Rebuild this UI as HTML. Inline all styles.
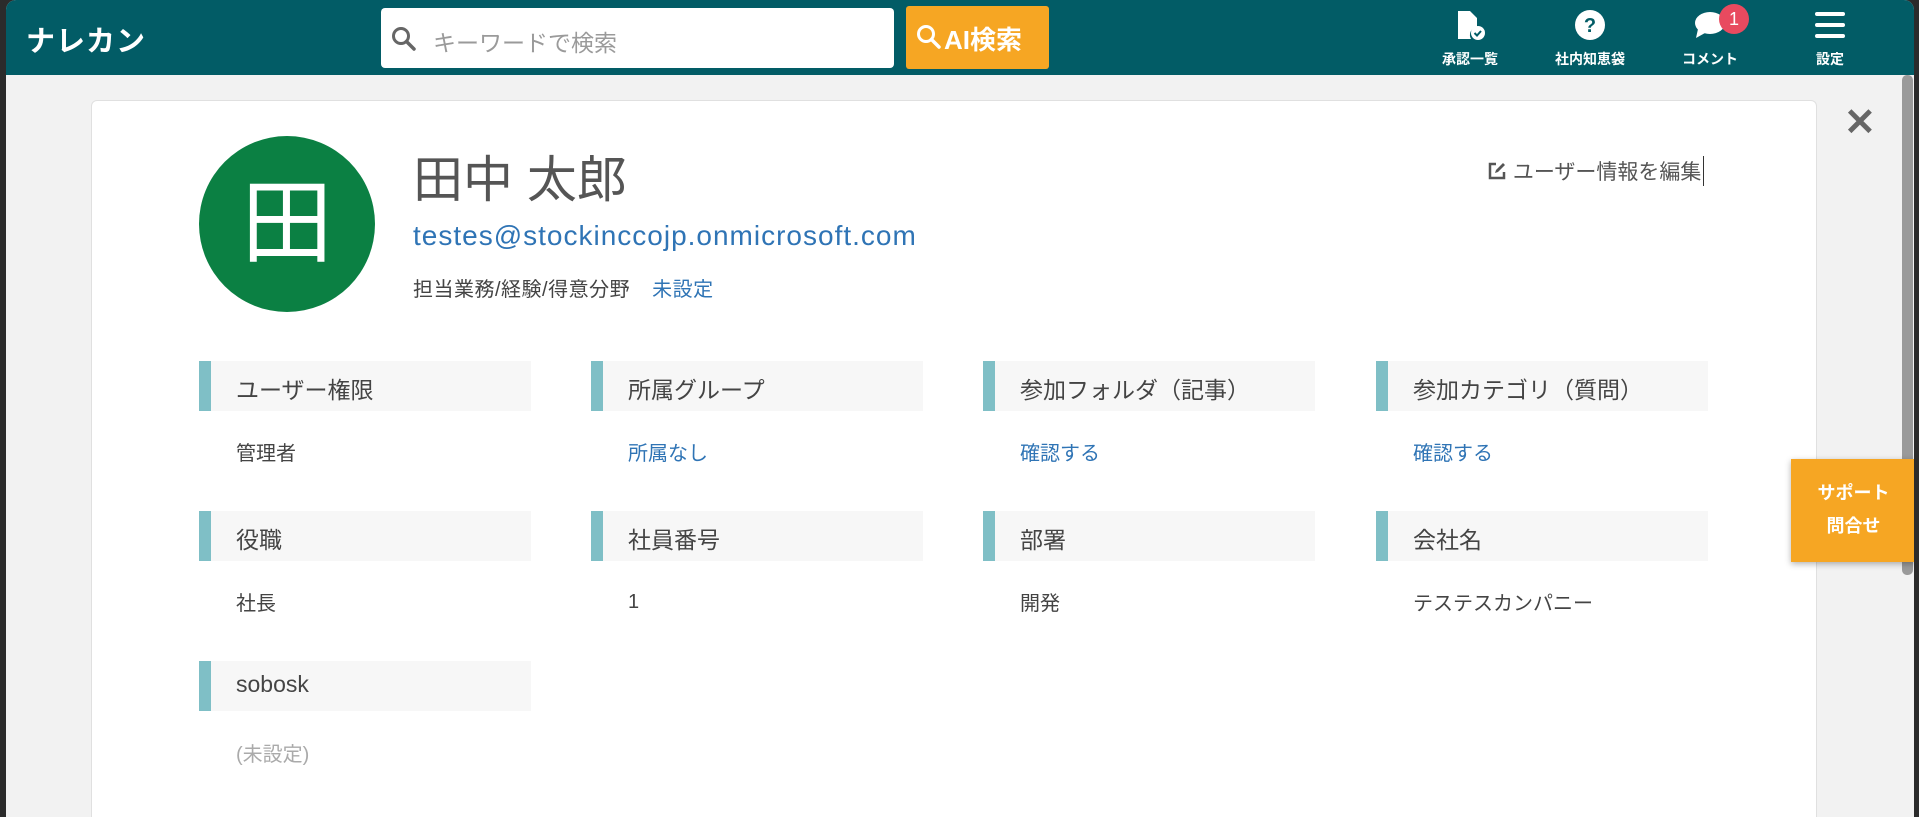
<!DOCTYPE html>
<html><head><meta charset="utf-8"><style>
*{margin:0;padding:0;box-sizing:border-box}
html,body{overflow:hidden}
body{width:1919px;height:817px;overflow:hidden;background:#2b2b2b;font-family:"Liberation Sans","Noto Sans CJK JP",sans-serif;position:relative}
#app{position:absolute;left:6px;top:0;width:1908px;height:817px;background:#f2f2f2;border-radius:10px 10px 0 0;overflow:hidden}
.hdr{position:absolute;left:0;top:0;width:1908px;height:75px;background:#025c66}
.logo{position:absolute;left:20px;top:18px;color:#fff;font-size:29px;font-weight:bold;letter-spacing:1px}
.search{position:absolute;left:375px;top:8px;width:513px;height:60px;background:#fff;border-radius:4px}
.search span{position:absolute;left:52px;top:16px;font-size:23px;color:#9a9a9a}
.ai{position:absolute;left:900px;top:6px;width:143px;height:63px;background:#f6a623;border-radius:3px;color:#fff;font-size:26px;font-weight:bold}
.nav{position:absolute;top:0;width:120px;height:75px;text-align:center;color:#fff;font-size:14px;font-weight:bold}
.nav svg{position:absolute;left:44px;top:9px}
.nav .l{position:absolute;left:0;right:0;top:49px}
.badge{position:absolute;left:69px;top:4px;width:30px;height:30px;border-radius:50%;background:#e84a5f;color:#fff;font-size:18px;line-height:30px;font-weight:normal}
.sb{position:absolute;left:1896px;top:75px;width:11px;height:500px;background:#9a9a9a;border-radius:5px}
.card{position:absolute;left:85px;top:100px;width:1726px;height:717px;background:#fff;border:1px solid #e0e0e0;border-bottom:none;border-radius:6px 6px 0 0}
.av{position:absolute;left:193px;top:136px;width:176px;height:176px;border-radius:50%;background:#0b8043;color:#fff;font-size:92px;line-height:176px;text-align:center}
.name{position:absolute;left:407px;top:140px;font-size:50px;color:#555}
.mail{position:absolute;left:407px;top:220px;font-size:28px;color:#2f74b5;letter-spacing:1px}
.tag{position:absolute;left:407px;top:273px;font-size:20px;color:#444;letter-spacing:.5px}
.tag a{color:#2f74b5;margin-left:22px}
.edit{position:absolute;left:1481px;top:156px;font-size:21px;color:#555;border-right:1px solid #333;padding-right:2px}
.bar{position:absolute;width:332px;height:50px;background:#f7f7f7;border-left:12px solid #7fbfc6;font-size:23px;color:#444;padding:10px 0 0 25px}
.val{position:absolute;font-size:20px;color:#444}
.blue{color:#2f74b5}
.x{position:absolute;left:1838px;top:100px;font-size:38px;color:#666;font-weight:bold}
.sup{position:absolute;left:1785px;top:459px;width:125px;height:103px;background:#f6a623;color:#fff;font-size:18px;font-weight:bold;text-align:center;line-height:33px;padding-top:18px;box-shadow:0 2px 6px rgba(0,0,0,.3)}
</style></head><body><div id="app">
<div class="hdr">
<div class="logo">ナレカン</div>
<div class="search"><svg style="position:absolute;left:10px;top:18px" width="26" height="26" viewBox="0 0 26 26"><circle cx="10" cy="10" r="7.5" fill="none" stroke="#666" stroke-width="3"/><path d="M15.5 15.5L23 23" stroke="#666" stroke-width="3.5" stroke-linecap="round"/></svg><span>キーワードで検索</span></div>
<div class="ai"><svg style="position:absolute;left:10px;top:18px" width="26" height="26" viewBox="0 0 26 26"><circle cx="10" cy="10" r="7.5" fill="none" stroke="#fff" stroke-width="3"/><path d="M15.5 15.5L23 23" stroke="#fff" stroke-width="3.5" stroke-linecap="round"/></svg><span style="position:absolute;left:38px;top:14px">AI検索</span></div>
<div class="nav" style="left:1404px"><svg width="32" height="32" viewBox="0 0 32 32"><path d="M4 2h12l7 7v9a8 8 0 0 0-6 12H4z" fill="#fff"/><circle cx="24" cy="24" r="7" fill="#fff"/><path d="M20.5 24l2.5 2.5 4-4.5" stroke="#025c66" stroke-width="2" fill="none"/></svg><div class="l">承認一覧</div></div>
<div class="nav" style="left:1524px"><svg width="32" height="32" viewBox="0 0 32 32"><circle cx="16" cy="16" r="15" fill="#fff"/><text x="16" y="23" text-anchor="middle" font-size="20" font-weight="bold" fill="#025c66" font-family="Liberation Sans">?</text></svg><div class="l">社内知恵袋</div></div>
<div class="nav" style="left:1644px"><svg width="32" height="32" viewBox="0 0 32 32"><ellipse cx="16" cy="14" rx="15" ry="11" fill="#fff"/><path d="M4 20L2 29l9-5z" fill="#fff"/></svg><div class="badge">1</div><div class="l">コメント</div></div>
<div class="nav" style="left:1764px"><svg width="32" height="32" viewBox="0 0 32 32"><path d="M3 5h26M3 16h26M3 27h26" stroke="#fff" stroke-width="4" stroke-linecap="round"/></svg><div class="l">設定</div></div>
</div>
<div class="sb"></div>
<div class="card"></div>
<div class="av">田</div>
<div class="name">田中 太郎</div>
<div class="mail">testes@stockinccojp.onmicrosoft.com</div>
<div class="tag">担当業務/経験/得意分野<a>未設定</a></div>
<div class="edit"><svg width="20" height="20" viewBox="0 0 20 20" style="vertical-align:-2px"><path d="M9 3H3v14h14v-6" stroke="#555" stroke-width="2.5" fill="none"/><path d="M8 12l1-3 7-7 2 2-7 7z" fill="#555"/></svg> ユーザー情報を編集</div>
<div class="x">✕</div>

<div class="bar" style="left:193px;top:361px">ユーザー権限</div><div class="val" style="left:230px;top:437px">管理者</div>
<div class="bar" style="left:585px;top:361px">所属グループ</div><div class="val blue" style="left:622px;top:437px">所属なし</div>
<div class="bar" style="left:977px;top:361px">参加フォルダ（記事）</div><div class="val blue" style="left:1014px;top:437px">確認する</div>
<div class="bar" style="left:1370px;top:361px">参加カテゴリ（質問）</div><div class="val blue" style="left:1407px;top:437px">確認する</div>

<div class="bar" style="left:193px;top:511px">役職</div><div class="val" style="left:230px;top:587px">社長</div>
<div class="bar" style="left:585px;top:511px">社員番号</div><div class="val" style="left:622px;top:591px">1</div>
<div class="bar" style="left:977px;top:511px">部署</div><div class="val" style="left:1014px;top:587px">開発</div>
<div class="bar" style="left:1370px;top:511px">会社名</div><div class="val" style="left:1407px;top:587px">テステスカンパニー</div>

<div class="bar" style="left:193px;top:661px">sobosk</div><div class="val" style="left:230px;top:738px;color:#aaa">(未設定)</div>

<div class="sup">サポート<br>問合せ</div>
</div></body></html>
